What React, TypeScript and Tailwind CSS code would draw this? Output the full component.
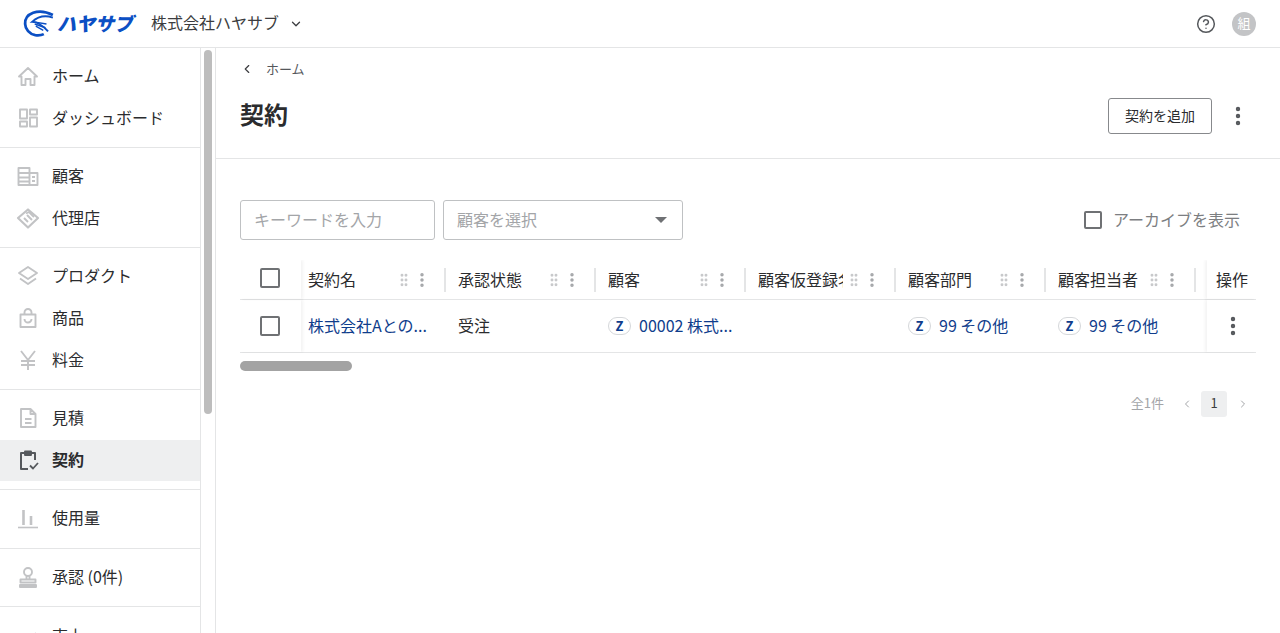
import { ChevronDown, ChevronLeft, ChevronRight, CircleHelp, EllipsisVertical, GripVertical } from 'lucide-react';

const jp = 'font-["Noto_Sans_CJK_JP","Noto_Sans",sans-serif]';

const Icon = ({ children, dark }: { children: React.ReactNode; dark?: boolean }) => (
  <svg
    viewBox="0 0 24 24"
    className={`h-6 w-6 shrink-0 ${dark ? 'text-[#55585c]' : 'text-[#c2c3c5]'}`}
    fill="none"
    stroke="currentColor"
    strokeWidth="1.9"
    strokeLinejoin="round"
  >
    {children}
  </svg>
);

const icons: Record<string, React.ReactNode> = {
  home: <path d="M3 12.500 12 4l9 8.500h-2.500V21H14.500v-6h-5v6H5.500v-8.500z" />,
  dash: <path d="M4 3.500h7v9H4zM14 3.500h7v5h-7zM4 15.500h7v5H4zM14 11.500h7v9h-7z" />,
  customer: <path d="M2.500 4h11v17h-11zM13.500 9h8v12h-8zM2.500 9h11M2.500 13.500h11M2.500 17.500h11M16 13h3M16 17h3" />,
  agent: (
    <>
      <path d="M12 3.500 22 12l-10 9.500L2 12z" strokeWidth="2.200" />
      <path d="m8 12 4 4M11 9l5 5M10 7.500l3-1.500 5 5" />
    </>
  ),
  product: <path d="m12 3 9 6-9 6-9-6zM4 14.500l8 5.500 8-5.500" />,
  goods: <path d="M4.500 8.500h15V21h-15zM8.500 8.500V6.500a3.500 3.500 0 0 1 7 0v2M8.500 13a3.500 3.500 0 0 0 7 0" />,
  yen: <path d="m5 3 7 9 7-9M12 12v10M5 13h14M5 17h14" />,
  quote: <path d="M5 3h9.500L19.500 8v13H5zM14.500 3v5h5M9 13h6.500M9 17h6.500" />,
  contract: (
    <>
      <path d="M9 5H5v16h7M15 5h4v7" strokeWidth="2" />
      <path d="M9 3.500h6V7H9z" fill="currentColor" />
      <path d="m14 17.500 3 3 5-5.500" strokeWidth="1.800" />
    </>
  ),
  usage: (
    <>
      <path d="M7.500 4v15M15 10v9" strokeWidth="2.600" />
      <path d="M2 21.500h20" strokeWidth="1.600" />
    </>
  ),
  approve: (
    <>
      <circle cx="12" cy="7" r="4" />
      <path d="M10.500 11v3M13.500 11v3M4.500 14.500h15v3h-15z" />
      <path d="M4 20h16v2H4z" fill="currentColor" />
    </>
  ),
  sales: <path d="m4 20 6-7 4 3 6-7" />,
};

const NavItem = ({ icon, label, active }: { icon: string; label: string; active?: boolean }) => (
  <div className={`flex h-[41.6px] items-center gap-[12px] pb-[1px] pl-[16px] ${active ? 'bg-[#eeeff0] font-bold' : ''}`}>
    <Icon dark={active}>{icons[icon]}</Icon>
    <span className="pb-[2px] text-[16px] text-[#2b2c2e]">{label}</span>
  </div>
);

const groups = [
  [
    { icon: 'home', label: 'ホーム' },
    { icon: 'dash', label: 'ダッシュボード' },
  ],
  [
    { icon: 'customer', label: '顧客' },
    { icon: 'agent', label: '代理店' },
  ],
  [
    { icon: 'product', label: 'プロダクト' },
    { icon: 'goods', label: '商品' },
    { icon: 'yen', label: '料金' },
  ],
  [
    { icon: 'quote', label: '見積' },
    { icon: 'contract', label: '契約', active: true },
  ],
  [{ icon: 'usage', label: '使用量' }],
  [{ icon: 'approve', label: '承認 (0件)' }],
  [{ icon: 'sales', label: '売上' }],
];

const columns = ['契約名', '承認状態', '顧客', '顧客仮登録名', '顧客部門', '顧客担当者'];

const Checkbox = () => <div className="h-5 w-5 rounded-[2px] border-2 border-[#6f7174] bg-white" />;

const ZLink = ({ text }: { text: string }) => (
  <div className="flex items-center gap-2 text-[#0f3d8c]">
    <span className="flex h-[18px] w-[23px] items-center justify-center rounded-full border border-[#d5d7da] text-[13px] font-bold text-[#0f3d8c]">
      Z
    </span>
    <span className="whitespace-nowrap pb-[2px]">{text}</span>
  </div>
);

const Logo = () => (
  <div className="flex items-center">
    <svg viewBox="0 0 30 30" className="h-[32px] w-[32px]" fill="none" stroke="#0b4fc4">
      <path d="M28 6.500C22 3.500 15 2.500 9.500 4.500 4 6.500 1.800 11 2 15c.2 5 4 9.500 9.500 10.500 3.500.5 6 0 8-1" strokeWidth="2.600" />
      <path d="M28 9C22 7 15 7 8.500 13c5 0 11 4.500 15 9" strokeWidth="1.800" />
      <path d="m10 13 12 2M11 15l10 3.500M12 17l7 4" strokeWidth="1.300" />
    </svg>
    <span className="ml-[2px] pb-[2px] text-[19px] font-black italic leading-none text-[#0b4fc4]">ハヤサブ</span>
  </div>
);

export default function App() {
  return (
    <div className={`flex h-[633px] w-[1280px] flex-col overflow-hidden bg-white text-[16px] text-[#2b2c2e] ${jp}`}>
      {/* Header */}
      <header className="flex h-[48px] shrink-0 items-center border-b border-[#e4e5e6] pl-[23px] pr-[24px]">
        <Logo />
        <span className="ml-[18px] pb-[3px] text-[#3c3d40]">株式会社ハヤサブ</span>
        <ChevronDown className="ml-[10px] h-[14px] w-[14px] text-[#3c3d40]" strokeWidth={2.2} />
        <div className="ml-auto flex items-center gap-[16px]">
          <CircleHelp className="h-[20px] w-[20px] text-[#55585c]" strokeWidth={1.8} />
          <div className="flex h-6 w-6 items-center justify-center rounded-full bg-[#c3c4c6] pb-[2px] text-[13px] text-white">組</div>
        </div>
      </header>

      <div className="flex min-h-0 flex-1">
        {/* Sidebar */}
        <aside className="flex w-[216px] shrink-0 border-r border-[#e4e5e6]">
          <nav className="h-[585px] w-[201px] shrink-0 overflow-hidden border-r border-[#e4e5e6] pt-[7.8px]">
            {groups.map((group, i) => (
              <div key={i} className={i > 0 ? 'border-t border-[#e4e5e6] pt-[8px] pb-[8px]' : 'pb-[8px]'}>
                {group.map((item) => (
                  <NavItem key={item.label} icon={item.icon} label={item.label} active={'active' in item && item.active} />
                ))}
              </div>
            ))}
          </nav>
          <div className="flex-1 px-[3px] pt-[2px]">
            <div className="h-[364px] w-full rounded-full bg-[#bdbdbd]" />
          </div>
        </aside>

        {/* Main */}
        <main className="min-w-0 flex-1">
          <div className="h-[111px] border-b border-[#e4e5e6] pl-[24px] pr-[30px]">
            <div className="flex h-[43px] items-center pb-[2px] text-[13px] text-[#55585c]">
              <ChevronLeft className="h-[14px] w-[14px] text-[#3c3d40]" strokeWidth={2} />
              <span className="ml-[12px]">ホーム</span>
            </div>
            <div className="mt-[5px] flex items-center justify-between">
              <h1 className="pb-[4px] text-[24px] font-bold leading-[36px]">契約</h1>
              <div className="flex items-center gap-[14px]">
                <button className="h-[36px] w-[104px] rounded-[3px] border border-[#87898c] pb-[1px] text-[14px]">契約を追加</button>
                <EllipsisVertical className="h-6 w-6 text-[#55585c]" strokeWidth={2.4} />
              </div>
            </div>
          </div>

          <div className="px-[24px] pt-[41px]">
            {/* Filters */}
            <div className="flex items-center gap-[8px]">
              <div className="flex h-[40px] w-[195px] items-center rounded-[3px] border border-[#bfc1c3] pb-[3px] pl-[13px] text-[#a3a5a8]">
                キーワードを入力
              </div>
              <div className="flex h-[40px] w-[240px] items-center justify-between rounded-[3px] border border-[#bfc1c3] pl-[13px] pr-[15px] text-[#a3a5a8]">
                <span className="pb-[3px]">顧客を選択</span>
                <span className="h-0 w-0 border-x-[6px] border-t-[6px] border-x-transparent border-t-[#6f7174]" />
              </div>
              <div className="ml-auto flex items-center gap-[11px] pr-[16px] text-[#7c7e81]">
                <div className="h-[18px] w-[18px] rounded-[2px] border-2 border-[#6f7174]" />
                <span className="pb-[3px]">アーカイブを表示</span>
              </div>
            </div>

            {/* Table */}
            <div className="mt-[20px] w-[1016px] overflow-hidden">
              <div className="flex h-[40px] border-b border-[#e4e5e6]">
                <div className="flex w-[61px] shrink-0 items-center pb-[4px] pl-[20px] shadow-[2px_0_3px_rgba(0,0,0,0.05)]">
                  <Checkbox />
                </div>
                {columns.map((col) => (
                  <div key={col} className="flex w-[150px] shrink-0 items-center pl-[7px] pr-[5px]">
                    <span className="w-[85px] overflow-hidden whitespace-nowrap pb-[2px]">{col}</span>
                    <GripVertical className="ml-[3px] h-[16px] w-[16px] text-[#c8c9cb]" strokeWidth={2.4} />
                    <EllipsisVertical className="ml-[1px] h-[18px] w-[18px] text-[#a3a5a8]" strokeWidth={2.6} />
                    <div className="ml-auto h-[24px] w-[2px] bg-[#e4e5e6]" />
                  </div>
                ))}
                <div className="w-[6px] shrink-0" />
                <div className="flex flex-1 items-center bg-white pb-[2px] pl-[9px] shadow-[-2px_0_3px_rgba(0,0,0,0.05)]">操作</div>
              </div>
              <div className="flex h-[53px] border-b border-[#e4e5e6]">
                <div className="flex w-[61px] shrink-0 items-center pl-[20px] shadow-[2px_0_3px_rgba(0,0,0,0.05)]">
                  <Checkbox />
                </div>
                <div className="flex w-[150px] shrink-0 items-center pb-[2px] pl-[7px] text-[#0f3d8c]">株式会社Aとの...</div>
                <div className="flex w-[150px] shrink-0 items-center pb-[2px] pl-[7px]">受注</div>
                <div className="flex w-[150px] shrink-0 items-center pl-[7px]">
                  <ZLink text="00002 株式..." />
                </div>
                <div className="w-[150px] shrink-0" />
                <div className="flex w-[150px] shrink-0 items-center pl-[7px]">
                  <ZLink text="99 その他" />
                </div>
                <div className="flex w-[150px] shrink-0 items-center pl-[7px]">
                  <ZLink text="99 その他" />
                </div>
                <div className="w-[6px] shrink-0" />
                <div className="flex flex-1 items-center justify-center bg-white pl-[3px] shadow-[-2px_0_3px_rgba(0,0,0,0.05)]">
                  <EllipsisVertical className="h-6 w-6 text-[#55585c]" strokeWidth={2.4} />
                </div>
              </div>
            </div>

            {/* Table scrollbar */}
            <div className="mt-[8px] h-[10px] w-[112px] rounded-full bg-[#a3a3a3]" />

            {/* Pagination */}
            <div className="mt-[20px] flex w-[1016px] items-center justify-end text-[13px] text-[#a3a5a8]">
              <span className="pb-[2px]">全1件</span>
              <ChevronLeft className="ml-[17px] h-[12px] w-[12px]" />
              <span className="ml-[8px] flex h-[26px] w-[26px] items-center justify-center rounded-[3px] bg-[#eeeff0] pb-[2px] text-[#3c3d40]">1</span>
              <ChevronRight className="ml-[10px] mr-[7px] h-[12px] w-[12px]" />
            </div>
          </div>
        </main>
      </div>
    </div>
  );
}
